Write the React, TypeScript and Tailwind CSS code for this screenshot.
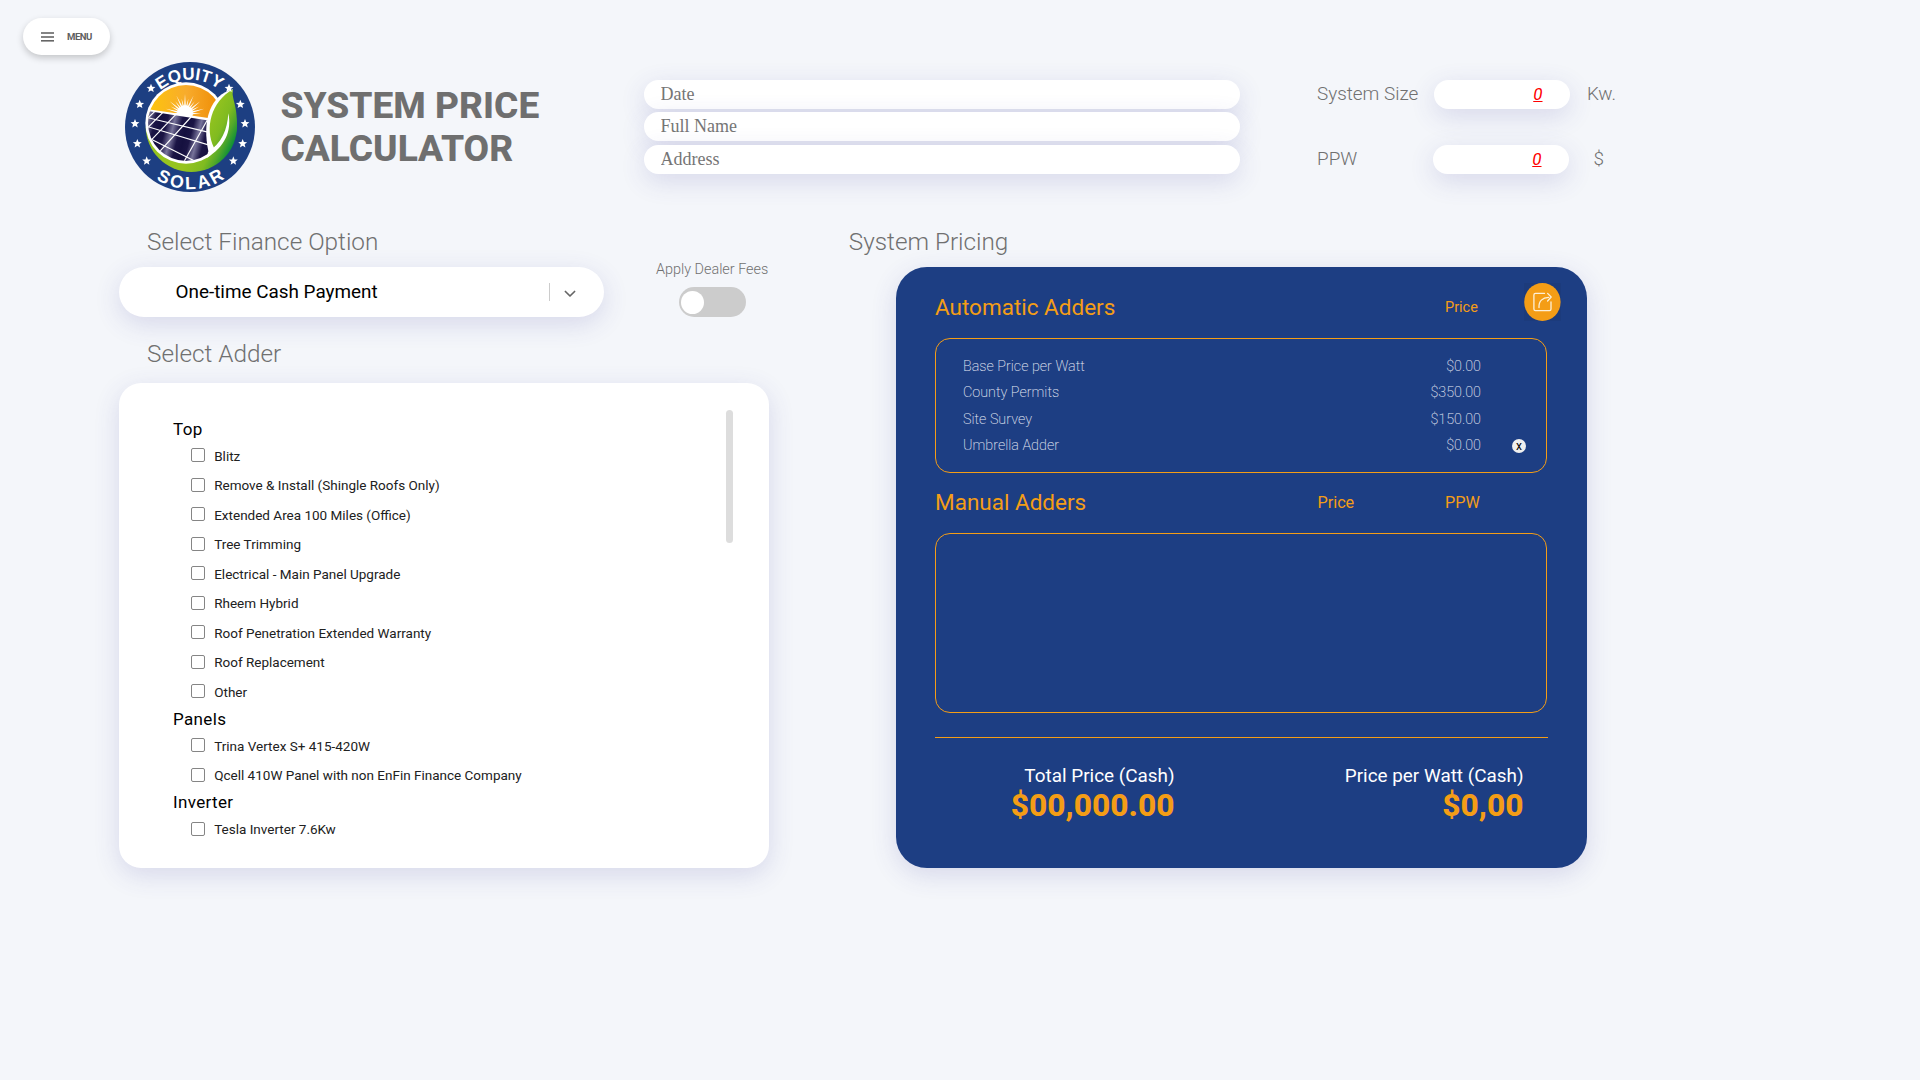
import type { ReactNode } from "react";

const adderGroups = [
  {
    title: "Top",
    items: [
      "Blitz",
      "Remove & Install (Shingle Roofs Only)",
      "Extended Area 100 Miles (Office)",
      "Tree Trimming",
      "Electrical - Main Panel Upgrade",
      "Rheem Hybrid",
      "Roof Penetration Extended Warranty",
      "Roof Replacement",
      "Other",
    ],
  },
  {
    title: "Panels",
    items: ["Trina Vertex S+ 415-420W", "Qcell 410W Panel with non EnFin Finance Company"],
  },
  { title: "Inverter", items: ["Tesla Inverter 7.6Kw"] },
];

const automaticAdders = [
  { name: "Base Price per Watt", price: "$0.00" },
  { name: "County Permits", price: "$350.00" },
  { name: "Site Survey", price: "$150.00" },
  { name: "Umbrella Adder", price: "$0.00", removable: true },
];

const stars = [
  [123, 115], [89, 163], [75, 221], [82, 281], [110, 333],
  [357, 115], [391, 163], [405, 221], [398, 281], [370, 333],
];

const rays = Array.from({ length: 15 }, (_, i) => -90 + (i - 7) * 12.5);

function Logo() {
  return (
    <svg viewBox="45 36 390 390" className="h-[130px] w-[130px]" role="img" aria-label="Equity Solar">
      <defs>
        <linearGradient id="sky" x1="0" x2="1">
          <stop offset="0" stopColor="#fdc60b" />
          <stop offset="0.5" stopColor="#f8ab2c" />
          <stop offset="0.85" stopColor="#f0910a" />
        </linearGradient>
        <linearGradient id="cell" gradientUnits="userSpaceOnUse" x1="128" y1="0" x2="166" y2="10" spreadMethod="reflect">
          <stop offset="0" stopColor="#15103f" />
          <stop offset="0.45" stopColor="#1b1545" />
          <stop offset="1" stopColor="#77739a" />
        </linearGradient>
        <linearGradient id="leaf" gradientUnits="userSpaceOnUse" x1="315" y1="151" x2="410" y2="196">
          <stop offset="0" stopColor="#96c41f" />
          <stop offset="0.5" stopColor="#80bb20" />
          <stop offset="0.75" stopColor="#52a82a" />
          <stop offset="1" stopColor="#0f9038" />
        </linearGradient>
        <clipPath id="scene">
          <circle cx="228" cy="219" r="114" />
        </clipPath>
        <clipPath id="lower">
          <path d="M 90 232 L 228 219 L 395 190 V 400 H 90 Z" />
        </clipPath>
        <path id="arcTop" d="M 98 231 A 142 142 0 0 1 382 231" />
        <path id="arcBottom" d="M 54 231 A 186 186 0 0 0 426 231" />
      </defs>
      <circle cx="240" cy="231" r="195" fill="#1d3f82" />
      <circle cx="244" cy="229" r="137" fill="url(#leaf)" clipPath="url(#lower)" />
      <circle cx="228" cy="219" r="122" fill="#fff" />
      <g clipPath="url(#scene)">
        <rect x="110" y="100" width="240" height="115" fill="url(#sky)" />
        {rays.map((angle, i) => (
          <path
            key={angle}
            d={i % 2 ? "M 0 -4 L 60 0 L 0 4 Z" : "M 0 -4 L 48 0 L 0 4 Z"}
            fill="#fff"
            transform={`translate(225 192) rotate(${angle})`}
          />
        ))}
        <circle cx="225" cy="190" r="24" fill="#fff" />
        <path d="M 100 176 L 300 205 L 300 220 L 100 220 Z" fill="#fff" />
        <path d="M 100 181 L 300 212 L 330 340 L 100 340 Z" fill="url(#cell)" />
        <g stroke="#fff" strokeWidth="3.4" fill="none">
          <path d="M 100 200 L 300 248" />
          <path d="M 100 226 L 320 292" />
          <path d="M 100 256 L 260 336" />
          <path d="M 134 185 L 108 210" />
          <path d="M 158 188 L 112 234" />
          <path d="M 197 194 L 122 272" />
          <path d="M 243 201 L 146 308" />
          <path d="M 292 210 L 222 335" />
        </g>
      </g>
      <path d="M 369 118 C 302 134 274 210 296 308 L 316 300 L 350 200 Z" fill="#fff" />
      <path d="M 369 118 C 363 146 382 160 381 229 C 381 262 352 305 312 330 L 302 322 L 312 293 C 284 236 302 156 369 118 Z" fill="url(#leaf)" />
      <path d="M 355 190 C 366 244 345 290 290 324 L 294 306 C 335 280 352 240 355 190 Z" fill="#fff" />
      {stars.map(([x, y]) => (
        <path
          key={`${x}-${y}`}
          transform={`translate(${x} ${y})`}
          d="M0 -14 L3.7 -4.8 L13.3 -4.3 L5.9 1.9 L8.2 11.3 L0 6.2 L-8.2 11.3 L-5.9 1.9 L-13.3 -4.3 L-3.7 -4.8 Z"
          fill="#fff"
        />
      ))}
      <g fill="#fff" className="font-['Liberation_Sans',Arial,sans-serif] font-bold">
        <text textAnchor="middle" className="text-[51px]">
          <textPath href="#arcTop" startOffset="49.7%">EQUITY</textPath>
        </text>
        <text textAnchor="middle" letterSpacing="8" className="text-[53px]">
          <textPath href="#arcBottom" startOffset="51%">SOLAR</textPath>
        </text>
      </g>
    </svg>
  );
}

function MenuButton() {
  return (
    <button className="mt-[18px] ml-[23px] flex h-[37px] w-[87px] items-center rounded-full bg-white pl-[18px] shadow-[0_3px_7px_rgba(0,0,0,0.2)]">
      <svg viewBox="0 0 13 10" className="h-[10px] w-[13px]" fill="#666">
        <rect y="0.2" width="13" height="1.6" />
        <rect y="4.2" width="13" height="1.6" />
        <rect y="8" width="13" height="1.6" />
      </svg>
      <span className="ml-[13px] text-[9.6px] leading-none font-bold tracking-[-0.5px] text-[#5f5f5f]">MENU</span>
    </button>
  );
}

function Field({ placeholder, className }: { placeholder: string; className: string }) {
  return (
    <input
      placeholder={placeholder}
      className={`${className} block h-[29px] w-[596px] rounded-[15px] bg-white px-[16.5px] font-['Liberation_Serif',serif] text-[18px] shadow-[0_7px_26px_rgba(62,60,155,0.16)] placeholder:text-[#757575]`}
    />
  );
}

function Measure({ label, unit, className, unitClass }: { label: string; unit: string; className: string; unitClass: string }) {
  return (
    <div className="flex h-[29px] items-center text-[18.9px] font-light text-[#707070]">
      <span className="-mt-[2px] w-[116px] leading-[19px]">{label}</span>
      <div className={`${className} flex h-[29px] w-[136px] items-center justify-end rounded-full bg-white pr-[27.5px] shadow-[0_7px_26px_rgba(62,60,155,0.16)]`}>
        <span className="text-[17px] leading-none font-normal text-[#f00] italic underline">0</span>
      </div>
      <span className={`${unitClass} -mt-[2px] leading-[19px]`}>{unit}</span>
    </div>
  );
}

function SectionTitle({ className, children }: { className: string; children: ReactNode }) {
  return <h2 className={`${className} h-[30px] text-[24.3px] leading-[30px] font-light text-[#707070]`}>{children}</h2>;
}

function FinanceColumn() {
  return (
    <section className="w-[650px]">
      <div className="flex h-[90px]">
        <div className="w-[485px]">
          <SectionTitle className="ml-[28px]">Select Finance Option</SectionTitle>
          <div className="mt-[10px] flex h-[50px] items-center rounded-[25px] bg-white pl-[56.5px] shadow-[0_7px_26px_rgba(62,60,155,0.16)]">
            <span className="w-[373.5px] text-[18.9px] leading-none text-black">One-time Cash Payment</span>
            <span className="h-[18px] w-px bg-[#ccc]" />
            <svg viewBox="0 0 12 8" className="mt-[3px] ml-[14px] h-[8px] w-[12px]" fill="none" stroke="#666" strokeWidth="1.7" strokeLinecap="round" strokeLinejoin="round">
              <path d="M1.4 1.5 L6 6 L10.6 1.5" />
            </svg>
          </div>
        </div>
        <div className="ml-[52px] flex flex-col items-center pt-[35px]">
          <span className="text-[14.4px] leading-[16px] font-light whitespace-nowrap text-[#707070]">Apply Dealer Fees</span>
          <div className="mt-[9px] flex h-[30px] w-[67px] items-center rounded-[15px] bg-[#ccc] pl-[2px]">
            <span className="h-[23px] w-[23px] rounded-full bg-white" />
          </div>
        </div>
      </div>
      <SectionTitle className="mt-[22px] ml-[28px]">Select Adder</SectionTitle>
      <div className="mt-[14px] flex h-[485px] rounded-[22px] bg-white pt-[34px] pl-[54px] shadow-[0_7px_26px_rgba(62,60,155,0.16)]">
        <div className="w-[553px]">
          {adderGroups.map((group) => (
            <div key={group.title}>
              <h3 className="h-[24.4px] text-[17px] leading-[24.4px] tracking-[0.35px] text-black">{group.title}</h3>
              {group.items.map((item) => (
                <label key={item} className="flex h-[29.5px] items-center pt-[0.8px] pl-[18px] text-[13.5px] text-[#212121]">
                  <input type="checkbox" className="-mt-[2.6px] h-[14px] w-[14px] appearance-none rounded-[2px] border border-[#858585]" />
                  <span className="ml-[9.2px] leading-none">{item}</span>
                </label>
              ))}
            </div>
          ))}
        </div>
        <div className="-mt-[7px] h-[133px] w-[7px] rounded-full bg-[#ddd]" />
      </div>
    </section>
  );
}

function ExportButton() {
  return (
    <button className="h-[38px] w-[37px]">
      <svg viewBox="0 0 37 38" className="h-[38px] w-[37px]" fill="none">
        <rect width="37" height="38" fill="#1c3b7c" />
        <ellipse cx="18.4" cy="19" rx="18.2" ry="19" fill="#f49d16" />
        <g stroke="#fdf0d8" strokeWidth="1.3" strokeLinecap="round" strokeLinejoin="round">
          <path d="M20.5 10.4 H11.5 Q9.9 10.4 9.9 12 V26 Q9.9 27.6 11.5 27.6 H25.5 Q27 27.6 27 26 V19" />
          <path d="M15 24.5 C14.6 18 18.5 14.6 24.6 14.4" />
          <path d="M23.6 10.4 L27.2 14 L23.6 18" />
        </g>
      </svg>
    </button>
  );
}

function PricingCard() {
  return (
    <div className="ml-[48px] h-[601px] w-[691px] rounded-[31px] bg-[#1d3e83] pl-[39px] text-[#f49d16] shadow-[0_7px_26px_rgba(62,60,155,0.16)]">
      <div className="flex h-[71px] pt-[16px]">
        <h3 className="w-[510px] text-[22.5px] leading-[49px]">Automatic Adders</h3>
        <span className="w-[79px] text-[14.5px] leading-[49px]">Price</span>
        <ExportButton />
      </div>
      <div className="h-[135px] w-[612px] rounded-[15px] border border-[#f49d16] pt-[14.6px] pl-[27px]">
        {automaticAdders.map((adder) => (
          <div key={adder.name} className="flex h-[26.5px] items-center text-[14.35px] font-extralight text-[#e4e8f4]">
            <span className="w-[260px] leading-none">{adder.name}</span>
            <span className="w-[258px] text-right leading-none">{adder.price}</span>
            {adder.removable && (
              <button className="-mt-px ml-[31px] flex h-[14px] w-[14px] items-center justify-center rounded-full bg-[#efefef] text-[12px] leading-none font-normal text-black">
                x
              </button>
            )}
          </div>
        ))}
      </div>
      <div className="flex h-[60px] leading-[59px]">
        <h3 className="w-[382.5px] text-[22.5px]">Manual Adders</h3>
        <span className="w-[127.5px] text-[16.2px]">Price</span>
        <span className="text-[16.2px]">PPW</span>
      </div>
      <div className="h-[180px] w-[612px] rounded-[15px] border border-[#f49d16]" />
      <div className="mt-[24px] h-px w-[613px] bg-[#f49d16]" />
      <div className="mt-[26px] flex text-right">
        <div className="w-[239.5px]">
          <p className="text-[18.9px] leading-[24px] text-white">Total Price (Cash)</p>
          <p className="mt-px text-[31.7px] leading-[34.5px] font-extrabold">$00,000.00</p>
        </div>
        <div className="w-[349px]">
          <p className="text-[18.9px] leading-[24px] text-white">Price per Watt (Cash)</p>
          <p className="mt-px text-[31.7px] leading-[34.5px] font-extrabold">$0,00</p>
        </div>
      </div>
    </div>
  );
}

export default function App() {
  return (
    <div className="flex h-[1080px] w-[1920px] flex-col items-start overflow-hidden bg-[#f4f6fa] font-[Roboto,sans-serif]">
      <MenuButton />
      <header className="mt-[7px] ml-[125px] flex h-[130px]">
        <Logo />
        <h1 className="mt-[22px] ml-[25.5px] w-[363.5px] text-[37.1px] leading-[43px] font-extrabold text-[#6f6f6f]">
          SYSTEM PRICE
          <br />
          CALCULATOR
        </h1>
        <div className="mt-[18px]">
          <Field placeholder="Date" className="mt-0" />
          <Field placeholder="Full Name" className="mt-[3px]" />
          <Field placeholder="Address" className="mt-[4px]" />
        </div>
        <div className="mt-[18px] ml-[77px] flex flex-col gap-[36px]">
          <Measure label="System Size" unit="Kw." className="ml-px" unitClass="ml-[17px]" />
          <Measure label="PPW" unit="$" className="ml-0" unitClass="ml-[24.5px]" />
        </div>
      </header>
      <main className="mt-[35px] ml-[119px] flex">
        <FinanceColumn />
        <section className="ml-[79px]">
          <SectionTitle className="mb-[10px] ml-[0.8px]">System Pricing</SectionTitle>
          <PricingCard />
        </section>
      </main>
    </div>
  );
}
